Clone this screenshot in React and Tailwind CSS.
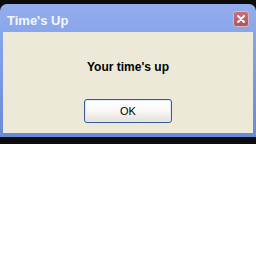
export default function App() {
  return (
    <div className="w-[256px] h-[256px] bg-white" style={{ fontFamily: '"Liberation Sans", Arial, sans-serif' }}>
      <div className="bg-[#0c0c0c] pt-[4px] pb-[7px]">
        {/* Window */}
        <div className="rounded-t-[7px] bg-gradient-to-b from-[#93aeee] via-[#7b9be5] to-[#6a88d8] px-[3px] pb-[4px]">
          {/* Title bar */}
          <div className="h-[28px] flex items-center justify-between pl-[4px] pr-[4px]">
            <span className="text-[#f4f7ff] font-bold text-[13px] leading-none mt-[4px]">Time's Up</span>
            <div className="w-[16px] h-[16px] mt-[1px] rounded-[3px] border border-[#dcb4bc] bg-gradient-to-b from-[#c87078] to-[#b0545e] flex items-center justify-center">
              <svg width="10" height="10" viewBox="0 0 10 10">
                <path d="M2 2 L8 8 M8 2 L2 8" stroke="white" strokeWidth="2" strokeLinecap="round" />
              </svg>
            </div>
          </div>
          {/* Body */}
          <div className="h-[101px] bg-[#ece9d8] flex flex-col items-center pt-[28px]">
            <p className="text-[12px] leading-[14px] font-bold text-black">Your time's up</p>
            <button className="mt-[25px] w-[88px] h-[24px] rounded-[3px] border border-[#3b5a98] bg-gradient-to-b from-white via-[#f8f8f6] to-[#e2e0d8] text-[11px] text-black shadow-[inset_0_0_0_1px_#dfe7f5]">
              OK
            </button>
          </div>
        </div>
      </div>
    </div>
  );
}
